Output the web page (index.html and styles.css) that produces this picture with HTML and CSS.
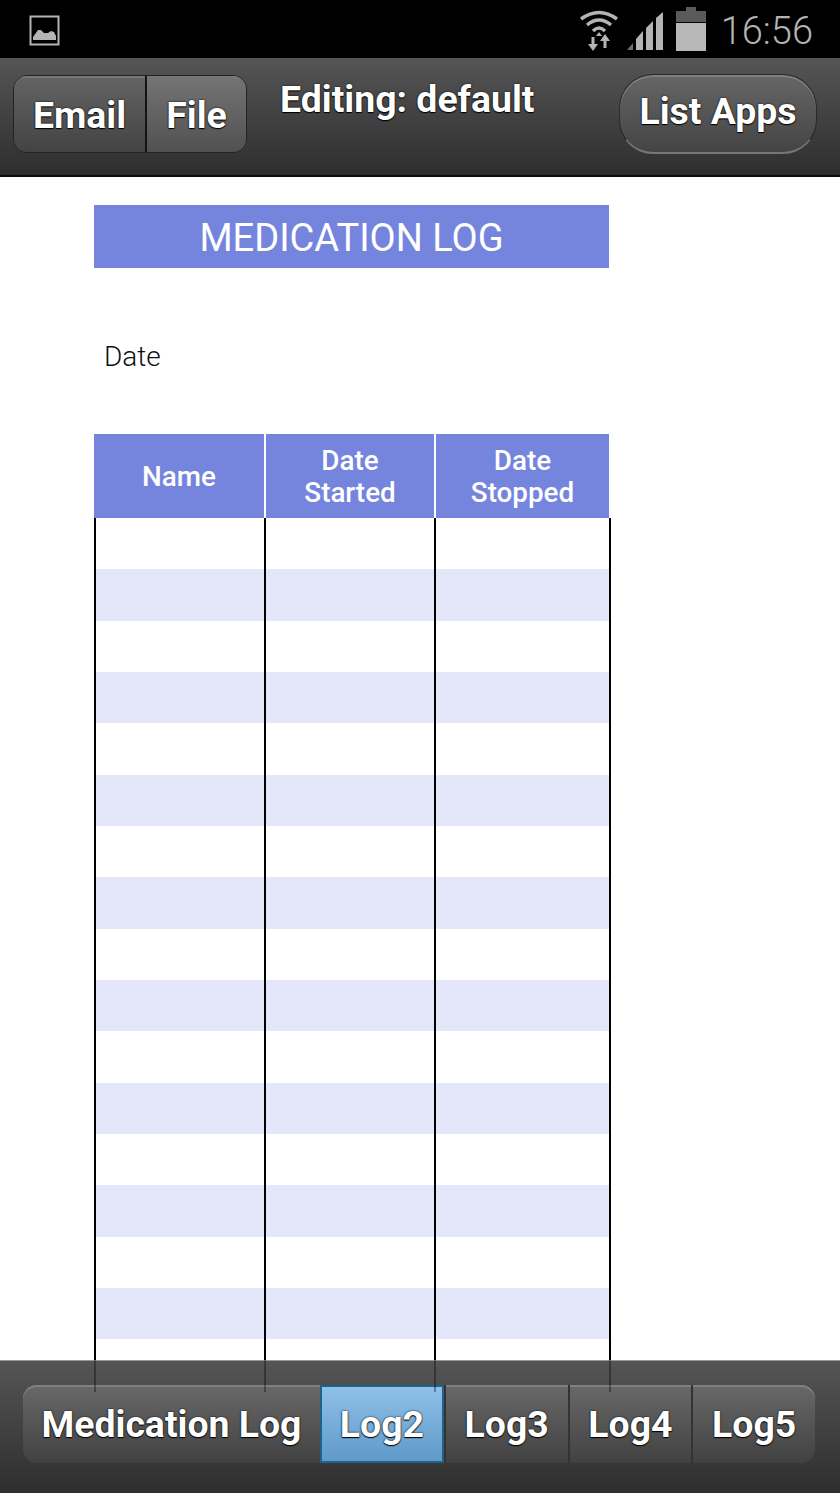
FILE: index.html
```html
<!DOCTYPE html>
<html>
<head>
<meta charset="utf-8">
<meta name="viewport" content="width=device-width,initial-scale=1.0">
<title>Medication Log</title>
<link rel="stylesheet" href="styles.css">
</head>
<body>
<div class="status">
<svg class="pic-icon" width="32" height="32" viewBox="0 0 32 32">
<rect x="1.5" y="1.5" width="28" height="28" fill="none" stroke="#b4b4b4" stroke-width="2"/>
<path d="M4 25 L4 22 L9 15 L12 15 L15 18 L19 18 L22 16 L25 17 L27 21 L27 25 Z" fill="#b4b4b4"/>
</svg>
<div class="status-right">
<svg width="42" height="44" viewBox="0 0 42 44">
<path d="M3 12 Q21 -1 39 12" fill="none" stroke="#b4b4b4" stroke-width="3.5"/>
<path d="M9 18 Q21 8 33 18" fill="none" stroke="#b4b4b4" stroke-width="3.5"/>
<path d="M15 24 Q21 18 27 24" fill="none" stroke="#b4b4b4" stroke-width="3.5"/>
<path d="M18 29 L21 25 L24 29 Z" fill="#b4b4b4"/>
<path d="M15 30 V38" stroke="#b4b4b4" stroke-width="3"/>
<path d="M10 37 H20 L15 44 Z" fill="#b4b4b4"/>
<path d="M27 41 V33" stroke="#b4b4b4" stroke-width="3"/>
<path d="M22 34 H32 L27 27 Z" fill="#b4b4b4"/>
</svg>
<svg class="signal" width="38" height="38" viewBox="0 0 38 38">
<path d="M0 38 L6 31 V38 Z" fill="#6e6e6e"/>
<path d="M9 38 V27 L16 19 V38 Z" fill="#b4b4b4"/>
<path d="M19 38 V16 L26 9 V38 Z" fill="#b4b4b4"/>
<path d="M29 38 V6 L36 0 V38 Z" fill="#b4b4b4"/>
</svg>
<svg class="battery" width="30" height="44" viewBox="0 0 30 44">
<path d="M10 0 H20 V4 H30 V15 H0 V4 H10 Z" fill="#5a5a5a"/>
<rect x="0" y="16" width="30" height="28" fill="#b8b8b8"/>
</svg>
<span class="clock">16:56</span>
</div>
</div>

<div class="topbar">
<div class="seg">
<div class="seg-btn email">Email</div>
<div class="seg-btn file">File</div>
</div>
<div class="title">Editing: default</div>
<div class="list-apps">List Apps</div>
</div>

<div class="content">
<div class="sheet">
<div class="sheet-title">MEDICATION LOG</div>
<div class="date-label">Date</div>
<div class="table">
<div class="rules">
<i></i><i></i><i></i><i></i>
</div>
<div class="head">
<div>Name</div>
<div>Date<br>Started</div>
<div>Date<br>Stopped</div>
</div>
<div class="row"></div>
<div class="row alt"></div>
<div class="row"></div>
<div class="row alt"></div>
<div class="row"></div>
<div class="row alt"></div>
<div class="row"></div>
<div class="row alt"></div>
<div class="row"></div>
<div class="row alt"></div>
<div class="row"></div>
<div class="row alt"></div>
<div class="row"></div>
<div class="row alt"></div>
<div class="row"></div>
<div class="row alt"></div>
</div>
</div>
</div>

<div class="bottombar">
<div class="tabs">
<div class="tab tab-first">Medication Log</div>
<div class="tab active">Log2</div>
<div class="tab">Log3</div>
<div class="tab">Log4</div>
<div class="tab tab-last">Log5</div>
</div>
</div>
</body>
</html>
```

FILE: styles.css
```css
html, body
{
margin:0;
padding:0;
}
body
{
width:840px;
height:1493px;
overflow:hidden;
display:flex;
flex-direction:column;
background:#fff;
font-family:Roboto, "Liberation Sans", sans-serif;
}
.status
{
height:58px;
flex:none;
background:#000;
display:flex;
align-items:flex-start;
justify-content:space-between;
padding:0 27px 0 29px;
box-sizing:border-box;
}
.pic-icon
{
margin-top:15px;
}
.status-right
{
display:flex;
align-items:flex-start;
margin-top:7px;
}
.signal
{
margin:5px 0 0 7px;
}
.battery
{
margin:0 0 0 11px;
}
.clock
{
font-size:38px;
font-weight:300;
line-height:44px;
color:#b4b4b4;
margin:2px 0 0 15px;
}
.topbar
{
height:119px;
flex:none;
box-sizing:border-box;
background:linear-gradient(#555,#2e2e2e);
border-bottom:2px solid #0c0c0c;
display:flex;
align-items:flex-start;
padding:17px 23px 0 13px;
color:#fff;
font-weight:700;
text-shadow:0 0 2px #000, 0 1px 1px #000;
}
.seg
{
display:flex;
height:78px;
width:234px;
flex:none;
border-radius:14px;
overflow:hidden;
border:1px solid #222;
box-sizing:border-box;
}
.seg-btn
{
font-size:37.4px;
line-height:79px;
text-align:center;
box-shadow:inset 0 2px 0 #777;
}
.email
{
width:131px;
background:linear-gradient(#646464,#434343);
}
.file
{
flex:1;
background:linear-gradient(#747474,#515151);
border-left:2px solid #141414;
}
.title
{
flex:1;
font-size:37.4px;
line-height:44px;
padding:2px 0 0 33px;
}
.list-apps
{
width:198px;
height:80px;
box-sizing:border-box;
border-radius:34px;
border:1px solid #2a2a2a;
border-bottom:2px solid #777;
background:linear-gradient(#666,#444);
box-shadow:inset 0 2px 0 #808080;
font-size:37.4px;
line-height:72px;
text-align:center;
margin-top:-1px;
}
.content
{
height:1183px;
flex:none;
padding:28px 0 0 94px;
box-sizing:border-box;
}
.sheet
{
width:515px;
}
.sheet-title
{
height:63px;
background:#7585de;
color:#fff;
font-size:38px;
line-height:67px;
text-align:center;
}
.date-label
{
font-size:28px;
font-weight:300;
color:#111;
line-height:32px;
padding:73px 0 0 10px;
height:166px;
box-sizing:border-box;
}
.table
{
position:relative;
}
.head
{
display:grid;
grid-template-columns:170px 168px 173px;
gap:2px;
height:84px;
color:#fff;
font-size:27.8px;
font-weight:500;
line-height:32px;
text-align:center;
}
.head div
{
background:#7585de;
display:flex;
align-items:center;
justify-content:center;
padding-top:1px;
}
.row
{
height:51.33px;
}
.alt
{
background:#e4e6f9;
}
/* column lines run past the sheet and show through the bottom bar */
.rules i
{
position:absolute;
top:84px;
width:2px;
height:874px;
z-index:2;
background:linear-gradient(#000 842px,rgba(0,0,0,.35) 842px);
}
.rules i:nth-child(1)
{
left:0;
}
.rules i:nth-child(2)
{
left:170px;
}
.rules i:nth-child(3)
{
left:340px;
}
.rules i:nth-child(4)
{
left:515px;
}
.bottombar
{
height:133px;
flex:none;
box-sizing:border-box;
position:relative;
z-index:1;
background:linear-gradient(#555,#2e2e2e);
border-top:1px solid #999;
padding:24px 0 0 23px;
}
.tabs
{
display:flex;
width:792px;
height:78px;
color:#fff;
font-size:37.4px;
font-weight:700;
line-height:78px;
text-align:center;
text-shadow:0 0 2px #000, 0 1px 1px #000;
}
.tab
{
width:123.75px;
box-sizing:border-box;
background:linear-gradient(#686868,#414141);
box-shadow:inset 0 2px 0 #808080;
border-left:2px solid #333;
}
.tab-first
{
width:297px;
border-left:0;
border-radius:14px 0 0 14px;
}
.tab-last
{
border-radius:0 14px 14px 0;
}
.active
{
background:linear-gradient(#8fc0e8,#5f9ac9);
border:2px solid #1e6488;
box-shadow:none;
line-height:74px;
}
```
